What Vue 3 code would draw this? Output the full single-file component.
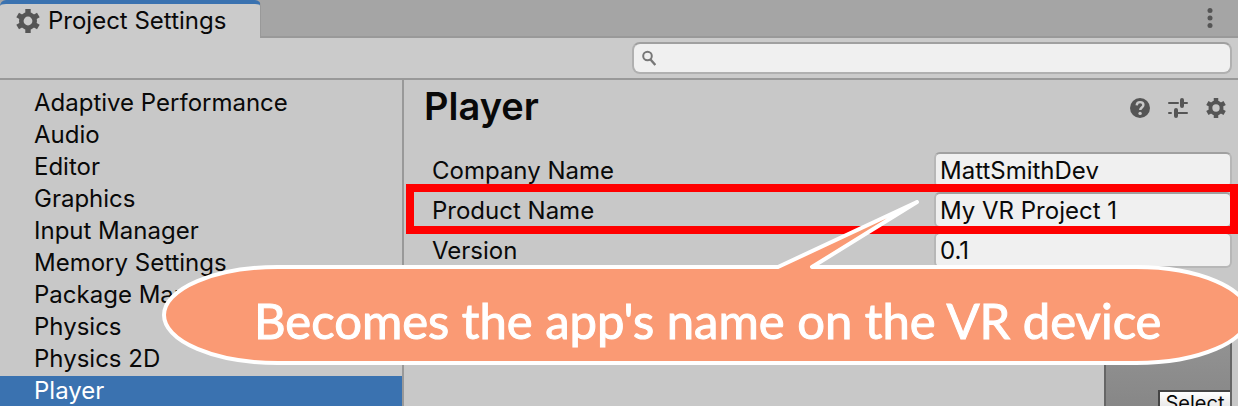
<script setup>
import { ref } from 'vue'

const query = ref('')
const selected = ref('Player')
const sections = [
  'Adaptive Performance',
  'Audio',
  'Editor',
  'Graphics',
  'Input Manager',
  'Memory Settings',
  'Package Manager',
  'Physics',
  'Physics 2D',
  'Player'
]
const fields = ref([
  { id: 'company', label: 'Company Name', value: 'MattSmithDev' },
  { id: 'product', label: 'Product Name', value: 'My VR Project 1', marked: true },
  { id: 'version', label: 'Version', value: '0.1' }
])
const teeth =
  'M9.3 0h5.4v24H9.3zM.3 8.3L3 3.7 23.7 15.7 21 20.3zM21 3.7L23.7 8.3 3 20.3.3 15.7z'
const ring =
  'M12 3a9 9 0 1 0 0 18a9 9 0 1 0 0-18z'
</script>

<template>
  <div class="window">
    <header class="tabbar">
      <button class="tab" type="button">
        <svg class="tab-icon" viewBox="0 0 24 24">
          <path :d="teeth" fill="#555" /><path :d="ring" fill="#555" /><circle cx="12" cy="12" r="4.4" fill="#cbcbcb" />
        </svg>
        Project Settings
      </button>
      <button class="icon-button menu" type="button" aria-label="Menu">
        <svg width="6" height="20" viewBox="0 0 6 20" fill="#555">
          <circle cx="3" cy="2.5" r="2.5" /><circle cx="3" cy="10" r="2.5" /><circle cx="3" cy="17.5" r="2.5" />
        </svg>
      </button>
    </header>

    <div class="toolbar">
      <label class="search">
        <svg width="14" height="16" viewBox="0 0 14 16" fill="none" stroke="#777" stroke-width="2">
          <circle cx="5.5" cy="6" r="4.3" /><path d="M8.5 9.5L13.3 15" stroke-width="2.4" />
        </svg>
        <input v-model="query" type="text" aria-label="Search settings" />
      </label>
    </div>

    <div class="body">
      <nav class="sidebar">
        <button
          v-for="name in sections"
          :key="name"
          type="button"
          class="section"
          :class="{ active: name === selected }"
          @click="selected = name"
        >{{ name }}</button>
      </nav>

      <main class="content">
        <div class="heading">
          <h1>Player</h1>
          <div class="actions">
            <button class="icon-button" type="button" aria-label="Help">
              <svg width="20" height="20" viewBox="0 0 20 20">
                <circle cx="10" cy="10" r="10" fill="#555" />
                <path d="M6.7 7.4C6.8 5.2 8.1 4.1 10.1 4.1c2 0 3.3 1.2 3.3 2.9 0 2.4-3.2 2.6-3.2 5.1" fill="none" stroke="#c8c8c8" stroke-width="2.4" />
                <circle cx="10.1" cy="15.4" r="1.7" fill="#c8c8c8" />
              </svg>
            </button>
            <button class="icon-button" type="button" aria-label="Presets">
              <svg width="20" height="20" viewBox="0 0 20 20" fill="none" stroke="#555" stroke-linecap="round">
                <path d="M1 5H10M14 5H19M1 15H3M8 15H19" stroke-width="2" />
                <path d="M14 2V8M8 12V18" stroke-width="4" />
              </svg>
            </button>
            <button class="icon-button" type="button" aria-label="Options">
              <svg width="20" height="20" viewBox="0 0 24 24">
                <path :d="teeth" fill="#555" /><path :d="ring" fill="#555" /><circle cx="12" cy="12" r="4.4" fill="#c8c8c8" />
              </svg>
            </button>
          </div>
        </div>

        <form class="fields" @submit.prevent>
          <div v-for="f in fields" :key="f.id" class="field" :class="{ marked: f.marked }">
            <label :for="f.id">{{ f.label }}</label>
            <input :id="f.id" v-model="f.value" type="text" />
          </div>
        </form>

        <div class="thumbnail">
          <button type="button" class="select">Select</button>
        </div>
      </main>
    </div>

    <aside class="callout">
      <svg class="bubble" width="1090" height="170" viewBox="0 0 1090 170">
        <path
          d="M116 67H616L755 2L650 67H974A113 48 0 0 1 974 163H116A114 48 0 0 1 116 67Z"
          fill="#fa9a74" stroke="#fff" stroke-width="4" stroke-linejoin="round"
        />
      </svg>
      <p>Becomes the app's name on the VR device</p>
    </aside>
  </div>
</template>

<style>
html,
body {
  margin: 0;
  background: #c8c8c8;
}
</style>

<style scoped>
.window {
  position: relative;
  display: flex;
  flex-direction: column;
  height: 100vh;
  overflow: hidden;
  background: #c8c8c8;
  color: #090909;
  font-family: Inter, "Liberation Sans", sans-serif;
  font-size: 24px;
  line-height: 32px;
}
button,
input {
  box-sizing: border-box;
  margin: 0;
  padding: 0;
  border: 0;
  background: none;
  color: inherit;
  font: inherit;
}
svg {
  display: block;
  flex: none;
}
.tabbar {
  display: flex;
  flex: none;
  justify-content: space-between;
  height: 38px;
  background: linear-gradient(#999, #999) 0 36px / 100% 2px no-repeat, #a5a5a5;
}
.tab {
  display: flex;
  align-items: center;
  gap: 8px;
  width: 261px;
  padding: 0 0 0 16px;
  border-top: 4px solid #3a72b0;
  border-right: 1px solid #999;
  border-radius: 6px 6px 0 0;
  background: #cbcbcb;
  white-space: nowrap;
}
.tab-icon {
  width: 24px;
  height: 24px;
}
.icon-button {
  display: flex;
  align-items: center;
  justify-content: center;
}
.menu {
  width: 20px;
  height: 36px;
  margin-right: 18px;
}
.toolbar {
  display: flex;
  flex: none;
  justify-content: flex-end;
  padding: 4px 6px;
  border-bottom: 2px solid #999;
  background: #cbcbcb;
}
.search {
  box-sizing: border-box;
  display: flex;
  align-items: center;
  gap: 6px;
  width: 600px;
  height: 32px;
  padding: 0 8px;
  border: 2px solid #b0b0b0;
  border-top-color: #a0a0a0;
  border-radius: 8px;
  background: #f0f0f0;
}
.search input {
  flex: 1;
  min-width: 0;
  height: 28px;
  outline: none;
}
.body {
  display: flex;
  flex: 1;
  min-height: 0;
}
.sidebar {
  flex: none;
  width: 402px;
  padding-top: 8px;
  border-right: 2px solid #999;
}
.section {
  display: block;
  width: 100%;
  height: 32px;
  padding: 0 0 2px 34px;
  line-height: 30px;
  text-align: left;
}
.section.active {
  background: #3a72b0;
  color: #fff;
}
.content {
  flex: 1;
  min-width: 0;
}
.heading {
  display: flex;
  align-items: center;
  justify-content: space-between;
  height: 56px;
  padding: 0 12px 0 20px;
}
h1 {
  margin: 0;
  padding-bottom: 4px;
  font-size: 38px;
  font-weight: 600;
  line-height: 52px;
}
.actions {
  display: flex;
  gap: 18px;
}
.fields {
  display: flex;
  flex-direction: column;
  gap: 4px;
  padding: 16px 6px 0 28px;
}
.field {
  position: relative;
  display: grid;
  grid-template-columns: 502px 1fr;
  align-items: center;
}
.field label {
  padding-top: 2px;
}
.field input {
  width: 100%;
  min-width: 0;
  height: 36px;
  padding: 0 4px;
  border: 2px solid #b7b7b7;
  border-top-color: #a0a0a0;
  border-radius: 6px;
  background: #f0f0f0;
}
.marked::after {
  content: "";
  position: absolute;
  inset: -8px -6px -6px -26px;
  border: 8px solid #f00;
  pointer-events: none;
  z-index: 1;
}
.thumbnail {
  box-sizing: border-box;
  display: flex;
  align-items: flex-end;
  justify-content: flex-end;
  width: 128px;
  height: 116px;
  margin: 34px 6px 0 auto;
  border: 2px solid #666;
  background: linear-gradient(#999, #858585);
}
.select {
  width: 72px;
  height: 26px;
  border: solid #444;
  border-width: 2px 0 2px 2px;
  background: linear-gradient(#fff, #ddd);
  font-size: 20px;
  line-height: 20px;
}
.callout {
  position: absolute;
  z-index: 2;
  top: 200px;
  left: 162px;
}
.callout p {
  position: absolute;
  top: 92px;
  left: 92px;
  margin: 0;
  color: #fff;
  font-family: Lato, "Open Sans", sans-serif;
  font-size: 49px;
  -webkit-text-stroke: 1px #fff;
  line-height: 56px;
  white-space: nowrap;
}
</style>
